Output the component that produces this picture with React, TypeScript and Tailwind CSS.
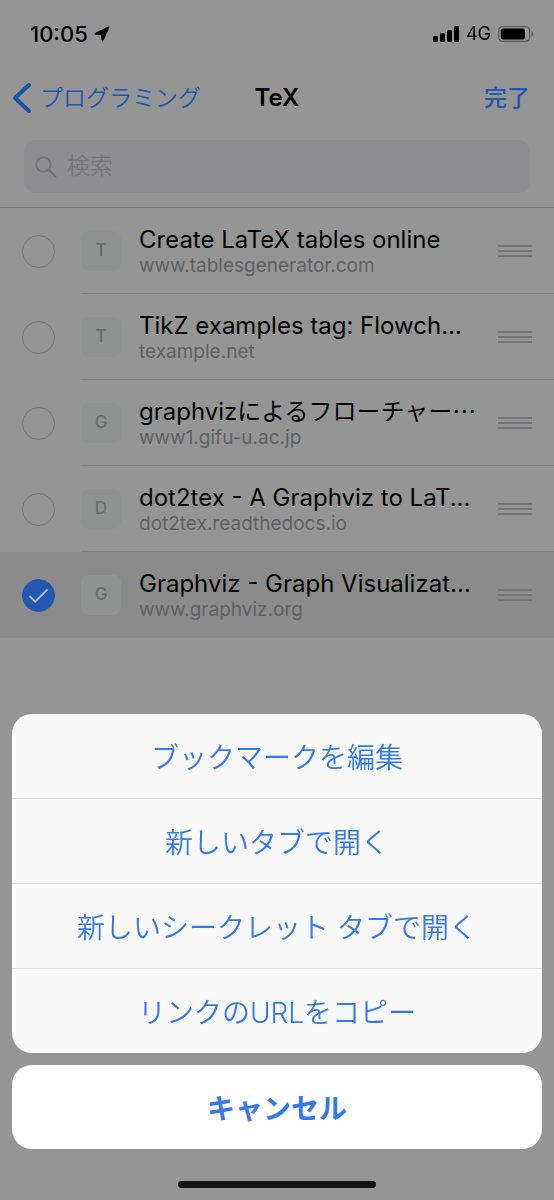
import React, { useState } from 'react';

interface Bookmark {
  id: string;
  initial: string;
  title: string;
  host: string;
}

const BOOKMARKS: Bookmark[] = [
  { id: 'tables', initial: 'T', title: 'Create LaTeX tables online', host: 'www.tablesgenerator.com' },
  { id: 'tikz', initial: 'T', title: 'TikZ examples tag: Flowch...', host: 'texample.net' },
  { id: 'gifu', initial: 'G', title: 'graphvizによるフローチャー⋯', host: 'www1.gifu-u.ac.jp' },
  { id: 'dot2tex', initial: 'D', title: 'dot2tex - A Graphviz to LaT...', host: 'dot2tex.readthedocs.io' },
  { id: 'graphviz', initial: 'G', title: 'Graphviz - Graph Visualizat...', host: 'www.graphviz.org' },
];

const ACTIONS = [
  'ブックマークを編集',
  '新しいタブで開く',
  '新しいシークレット タブで開く',
  'リンクのURLをコピー',
];

const StatusBar = () => (
  <div className="flex h-17 items-center justify-between pl-7.5 pr-5 text-black">
    <div className="flex items-center gap-1.5">
      <span className="text-[22px] font-medium">10:05</span>
      <svg className="h-4 w-4" viewBox="0 0 16 16" fill="currentColor">
        <path d="M14.4.6 1 6.9C0 7.4.2 8.6 1.3 8.7l5.3.4 1.2 5.7c.2 1 1.2 1 1.6.1l6-13.3c.3-.8-.2-1.3-1-1Z" />
      </svg>
    </div>
    <div className="flex items-center gap-[7px]">
      <svg className="h-4 w-6.5" viewBox="0 0 26 16" fill="currentColor">
        <rect x="0" y="10" width="5" height="6" rx="1.2" />
        <rect x="7" y="7" width="5" height="9" rx="1.2" />
        <rect x="14" y="4" width="5" height="12" rx="1.2" />
        <rect x="21" y="0" width="5" height="16" rx="1.2" />
      </svg>
      <span className="text-lg leading-6">4G</span>
      <svg className="h-4 w-9" viewBox="0 0 36 16">
        <rect x=".6" y=".6" width="31" height="14.8" rx="4" fill="none" stroke="#5c5c5c" strokeWidth="1.2" />
        <rect x="2.8" y="2.6" width="24" height="10.8" rx="2" fill="#000" />
        <path d="M33.5 5.2c2.4.8 2.4 4.8 0 5.6Z" fill="#5c5c5c" />
      </svg>
    </div>
  </div>
);

const NavBar = () => (
  <header className="grid h-15 grid-cols-[1fr_auto_1fr] items-center px-3">
    <a href="#programming" className="flex items-center gap-2 text-[23px] font-[350] text-[#2356ae]">
      <svg className="h-8 w-5" viewBox="0 0 20 32" fill="none" stroke="#1d51a6" strokeWidth="4" strokeLinecap="round" strokeLinejoin="round">
        <path d="M17 3 3 16l14 13" />
      </svg>
      プログラミング
    </a>
    <h1 className="text-2xl font-semibold text-black">TeX</h1>
    <button className="justify-self-end pr-3 text-[23px] font-medium text-[#2356ae]">完了</button>
  </header>
);

const SearchBox = () => (
  <div className="px-6 pt-3 pb-3.5">
    <label className="flex h-[53px] items-center gap-2.5 rounded-xl bg-[#8e8e91] px-[11px]">
      <svg className="h-5.5 w-5.5 shrink-0" viewBox="0 0 22 22" fill="none" stroke="#737377" strokeWidth="1.8" strokeLinecap="round">
        <circle cx="8.5" cy="8.5" r="7.2" />
        <path d="m14 14 6.4 6.4" strokeWidth="2.2" />
      </svg>
      <input
        type="search"
        aria-label="検索"
        placeholder="検索"
        className="w-full min-w-0 bg-transparent text-[23px] font-[350] text-black outline-none placeholder:text-[#76767a]"
      />
    </label>
  </div>
);

interface BookmarkRowProps {
  bookmark: Bookmark;
  checked: boolean;
  last: boolean;
  onToggle: () => void;
}

const BookmarkRow: React.FC<BookmarkRowProps> = ({ bookmark, checked, last, onToggle }) => (
  <li className={`flex h-[86px] items-stretch pl-5.5 ${checked ? 'bg-[#8b8b8b]' : ''}`}>
    <div className="relative mr-[26px] flex w-[33px] shrink-0 items-center">
      <input
        type="checkbox"
        id={bookmark.id}
        checked={checked}
        onChange={onToggle}
        className="h-[33px] w-[33px] appearance-none rounded-full border border-[#77777b] checked:border-[#2357b0] checked:bg-[#2357b0]"
      />
      {checked && (
        <svg className="pointer-events-none absolute inset-x-0 m-auto h-8 w-8" viewBox="0 0 32 32" fill="none" stroke="#b9bdc6" strokeWidth="1.8">
          <path d="m6.5 17 5.7 5.7L24.5 10.3" />
        </svg>
      )}
    </div>
    <div className={`flex min-w-0 flex-1 items-center border-b pr-5.5 ${last ? 'border-[#8b8b8b]' : 'border-[#838384]'}`}>
      <span className={`flex h-10 w-10 shrink-0 items-center justify-center rounded-lg text-[17px] font-medium text-[#6b6d6d] ${checked ? 'bg-[#909292]' : 'bg-[#8f9291]'}`}>
        {bookmark.initial}
      </span>
      <label htmlFor={bookmark.id} className="ml-4.5 flex min-w-0 flex-1 flex-col pt-0.5">
        <span className="truncate text-2xl leading-7 text-black">{bookmark.title}</span>
        <span className="truncate text-[19px] leading-6 text-[#616163]">{bookmark.host}</span>
      </label>
      <button aria-label="並べ替え" className="shrink-0">
        <svg className="h-3 w-8.5" viewBox="0 0 34 12" fill="#757578">
          <rect y="0" width="34" height="2" />
          <rect y="5" width="34" height="2" />
          <rect y="10" width="34" height="2" />
        </svg>
      </button>
    </div>
  </li>
);

const ActionSheet = () => (
  <div className="fixed inset-x-0 bottom-0 flex flex-col items-center gap-3 px-3 pb-3 text-[28px] text-[#3478f0]">
    <div className="w-full divide-y divide-[#e0e0e2] overflow-hidden rounded-[20px] bg-[#f9f9f9]">
      {ACTIONS.map((action) => (
        <button key={action} className="flex h-[85px] w-full items-center justify-center pt-1 font-[350] last:h-21">
          {action}
        </button>
      ))}
    </div>
    <button className="h-21 w-full rounded-[20px] bg-white pt-1 font-bold">キャンセル</button>
    <div className="mt-5 h-[7px] w-9/24 rounded-full bg-[#151515]" />
  </div>
);

const App = () => {
  const [selected, setSelected] = useState<string[]>(['graphviz']);

  const toggle = (id: string) => {
    setSelected((prev) => (prev.includes(id) ? prev.filter((s) => s !== id) : [...prev, id]));
  };

  return (
    <div lang="ja" className="min-h-screen bg-[#959595] font-['Inter','Noto_Sans_CJK_JP',sans-serif]">
      <StatusBar />
      <NavBar />
      <SearchBox />
      <ul className="border-t border-[#7c7c7d]">
        {BOOKMARKS.map((bookmark, i) => (
          <BookmarkRow
            key={bookmark.id}
            bookmark={bookmark}
            checked={selected.includes(bookmark.id)}
            last={i === BOOKMARKS.length - 1}
            onToggle={() => toggle(bookmark.id)}
          />
        ))}
      </ul>
      <ActionSheet />
    </div>
  );
};

export default App;
